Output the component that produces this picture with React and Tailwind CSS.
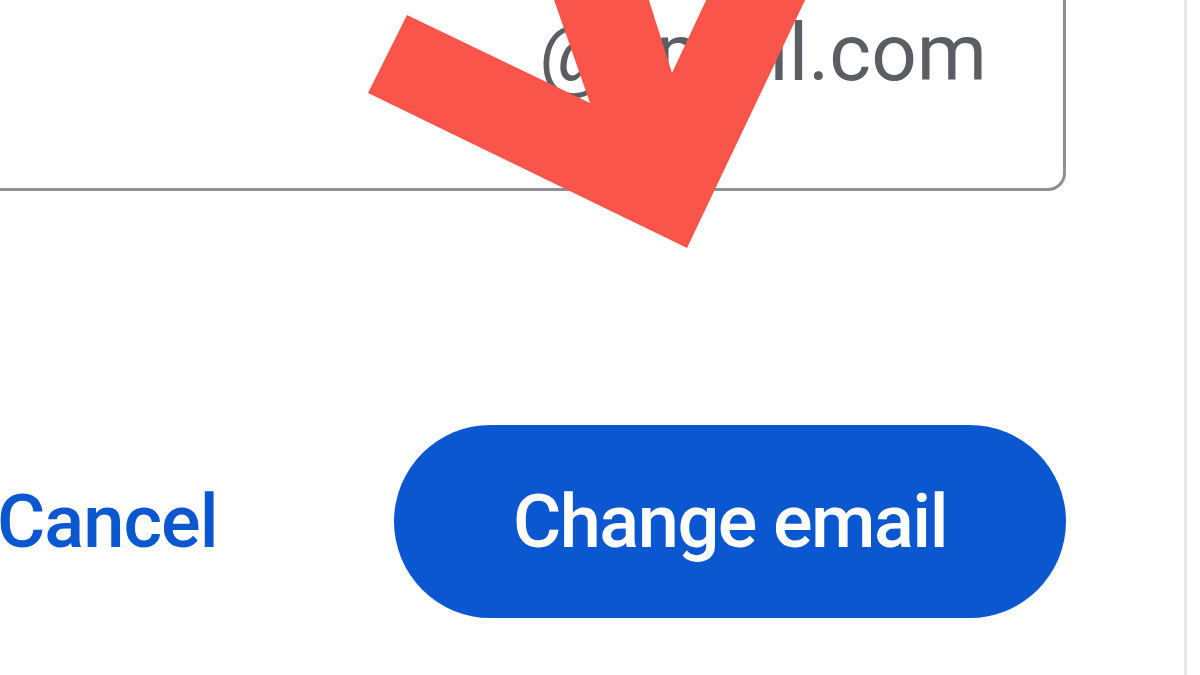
import React from 'react';

function Arrow() {
  // red annotation arrow drawn over the form
  return (
    <svg
      className="absolute top-0 left-0 pointer-events-none"
      width="1200"
      height="675"
      viewBox="0 0 1200 675"
    >
      <polygon
        points="552,-6 647,-6 672,73 709,-6 808,-6 687,248 368,93 407,15 590,103"
        fill="#fa554a"
      />
    </svg>
  );
}

export default function App() {
  return (
    <div className="relative w-[1200px] h-[675px] overflow-hidden bg-white flex font-[Roboto]">
      {/* Dialog body */}
      <main className="w-[1184px] flex flex-col pr-[118px]">
        {/* Email field (top cut off) */}
        <div className="-ml-[20px] -mt-[49px] h-[240px] border-[3px] border-[#8f8f8f] rounded-[18px] flex justify-end pr-[76px] pt-[59px]">
          <span className="text-[80px] leading-[80px] text-[#5a5d61]">@gmail.com</span>
        </div>

        {/* Actions */}
        <div className="mt-[234px] flex items-center justify-between">
          <button className="-ml-[3px] text-[74px] leading-none font-medium tracking-[-1px] text-[#0b57d0]">
            Cancel
          </button>
          <button className="w-[672px] h-[193px] rounded-full bg-[#0b57d0] text-white text-[74px] leading-none font-medium tracking-[-1.5px] flex items-center justify-center">
            Change email
          </button>
        </div>
      </main>

      {/* Side divider */}
      <div className="w-[3px] h-full bg-[#e8e8e8]" />
      <div className="flex-1" />

      <Arrow />
    </div>
  );
}
